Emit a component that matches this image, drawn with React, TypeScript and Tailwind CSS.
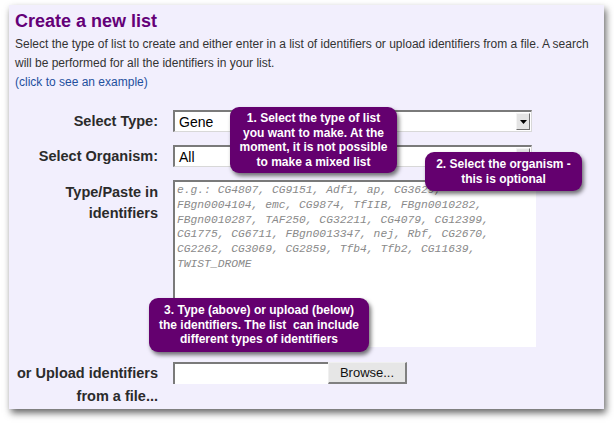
import React from 'react';

const exampleLines = [
  'e.g.: CG4807, CG9151, Adf1, ap, CG3629,',
  'FBgn0004104, emc, CG9874, TfIIB, FBgn0010282,',
  'FBgn0010287, TAF250, CG32211, CG4079, CG12399,',
  'CG1775, CG6711, FBgn0013347, nej, Rbf, CG2670,',
  'CG2262, CG3069, CG2859, Tfb4, Tfb2, CG11639,',
  'TWIST_DROME',
];

function Callout({ className, lines }: { className: string; lines: string[] }) {
  return (
    <div
      className={`absolute rounded-[9px] bg-[#64006f] text-center text-[12px] font-bold leading-[14.5px] text-white shadow-[2px_3px_4px_rgba(0,0,0,0.55)] ${className}`}
    >
      {lines.map((l) => (
        <div key={l} className="whitespace-pre">{l}</div>
      ))}
    </div>
  );
}

function FakeSelect({ value }: { value: string }) {
  return (
    <div className="flex h-[22px] w-[359px] items-center justify-between border-t-2 border-l-2 border-r border-b border-t-[#7a7a7a] border-l-[#7a7a7a] border-r-[#d8d8d8] border-b-[#d8d8d8] bg-white pl-[4px] pr-[1px]">
      <span className="text-[14px] font-normal leading-none text-black">{value}</span>
      <div className="flex h-[17px] w-[14px] items-center justify-center border border-t-[#f4f4f4] border-l-[#f4f4f4] border-r-[#6e6e6e] border-b-[#6e6e6e] bg-[#e4e4e4]">
        <svg width="7" height="4" viewBox="0 0 7 4">
          <path d="M0 0h7L3.5 4z" fill="#000" />
        </svg>
      </div>
    </div>
  );
}

export default function App() {
  return (
    <div className="min-h-[424px] bg-white pt-[5px] pl-[9px] font-['Liberation_Sans',Arial,sans-serif]">
      <div className="relative h-[404px] w-[595px] bg-[#f2effd] pl-[6px] pt-[4px] shadow-[2px_4px_7px_rgba(0,0,0,0.6)]">
        <h1 className="text-[18px] font-bold leading-[24px] text-[#640078]">Create a new list</h1>
        <p className="mt-[2px] pr-[4px] text-[12px] leading-[19px] text-[#333]">
          Select the type of list to create and either enter in a list of identifiers or upload identifiers from a file. A search will be performed for all the identifiers in your list.
        </p>
        <div className="text-[12px] leading-[19px] text-[#1f4f9d]">(click to see an example)</div>

        <div className="mt-[18px] flex flex-col text-[14.5px] font-bold text-[#2b2b2b]">
          <div className="flex items-center gap-[15px]">
            <div className="w-[143px] text-right leading-[22px]">Select Type:</div>
            <FakeSelect value="Gene" />
          </div>
          <div className="mt-[13px] flex items-center gap-[15px]">
            <div className="w-[143px] text-right leading-[22px]">Select Organism:</div>
            <FakeSelect value="All" />
          </div>
          <div className="mt-[13px] flex items-start gap-[15px]">
            <div className="w-[143px] pt-[2px] text-right leading-[21px]">
              Type/Paste in
              <br />
              identifiers
            </div>
            <div className="h-[167px] w-[363px] border-t-2 border-l-2 border-t-[#7a7a7a] border-l-[#7a7a7a] bg-white pl-[2px] pt-[1px] font-['Liberation_Mono','Courier_New',monospace] text-[11.3px] font-normal italic leading-[14.8px] text-[#8a8a8a]">
              {exampleLines.map((l) => (
                <div key={l} className="whitespace-pre">{l}</div>
              ))}
            </div>
          </div>
          <div className="mt-[15px] flex items-start gap-[15px]">
            <div className="w-[143px] text-right leading-[23px]">
              or Upload identifiers
              <br />
              from a file...
            </div>
            <div className="flex items-start">
              <div className="h-[22px] w-[155px] border-t-2 border-l-2 border-t-[#7a7a7a] border-l-[#7a7a7a] bg-white" />
              <div className="flex h-[22px] w-[79px] items-center justify-center border border-t-[#f0f0f0] border-l-[#f0f0f0] border-r-2 border-b-2 border-r-[#808080] border-b-[#808080] bg-[#e6e6e6] text-[13px] font-normal text-[#111]">
                Browse...
              </div>
            </div>
          </div>
        </div>

        <Callout
          className="left-[221px] top-[102px] w-[167px] pt-[4px] pb-[4px]"
          lines={['1. Select the type of list', 'you want to make. At the', 'moment, it is not possible', 'to make a mixed list']}
        />
        <Callout
          className="left-[416px] top-[147px] w-[157px] pt-[5px] pb-[5px]"
          lines={['2. Select the organism -', 'this is optional']}
        />
        <Callout
          className="left-[140px] top-[293px] w-[220px] pt-[5px] pb-[5px]"
          lines={['3. Type (above) or upload (below)', 'the identifiers. The list  can include', 'different types of identifiers']}
        />
      </div>
    </div>
  );
}
